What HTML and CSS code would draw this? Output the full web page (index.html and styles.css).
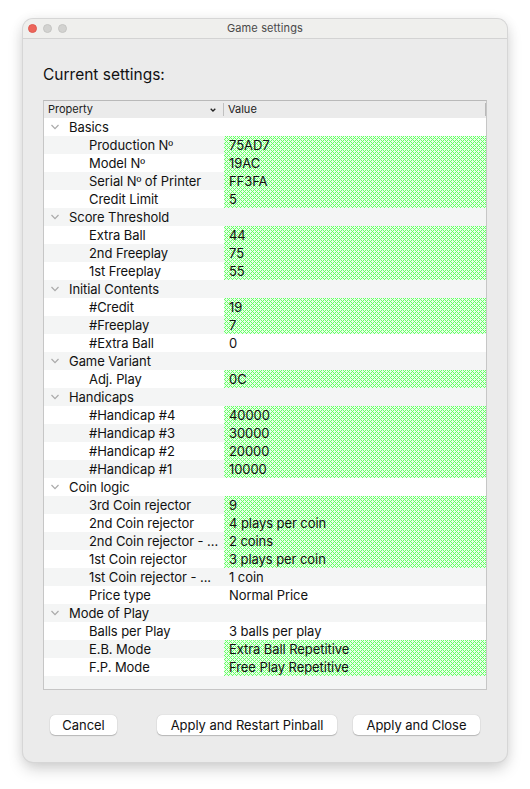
FILE: index.html
```
<!DOCTYPE html>
<html lang="en">
<head>
<meta charset="utf-8">
<title>Game settings</title>
<link rel="stylesheet" href="styles.css">
</head>
<body>
<main class="window">
  <header class="titlebar">
    <div class="lights"><i class="light close"></i><i class="light"></i><i class="light"></i></div>
    <span class="title">Game settings</span>
  </header>
  <h1 class="heading">Current settings:</h1>
  <section class="tree">
    <div class="head">
      <div class="head-property">Property
        <svg class="sort" width="6" height="4" viewBox="0 0 6 4"><path d="M.7.7 3 3 5.3.7" fill="none" stroke="#222" stroke-width="1.3"/></svg>
      </div>
      <div class="head-value">Value</div>
    </div>
    <div class="rows" id="rows"></div>
  </section>
  <footer class="buttons">
    <button class="cancel">Cancel</button>
    <button class="restart">Apply and Restart Pinball</button>
    <button class="apply">Apply and Close</button>
  </footer>
</main>
<script src="tree.js"></script>
</body>
</html>
```
FILE: styles.css
```
* { box-sizing: border-box; }
body { display: flow-root; margin: 0; height: 789px; overflow: hidden; background: #fff; font-family: Inter, "Liberation Sans", sans-serif; color: #111; }
.window { width: 484px; height: 743px; margin: 19px 0 0 23px; background: #ebebeb; border-radius: 10px; overflow: hidden; box-shadow: 0 0 0 1px #d6d6d6, 0 7px 15px rgba(0,0,0,.18), 0 0 14px rgba(0,0,0,.06); }
.titlebar { height: 20px; background: #efefed; border-bottom: 1px solid #d3d3d3; display: grid; grid-template-columns: 60px 1fr 60px; align-items: center; }
.lights { display: flex; gap: 6px; padding-left: 5px; }
.light { width: 9px; height: 9px; border-radius: 50%; background: #d2d2d0; border: 1px solid #c5c5c3; }
.close { background: #ed655a; border-color: #df5c52; }
.title { text-align: center; font-size: 11px; line-height: 18px; letter-spacing: .13px; color: #494949; position: relative; top: -1px; }
.heading { margin: 25px 0 0 20px; height: 36px; font-size: 15.5px; font-weight: 400; line-height: 22px; white-space: nowrap; }
.tree { width: 444px; height: 590px; margin-left: 20px; border: 1px solid #c6c6c6; border-top-color: #b9b9b9; background: #fff; overflow: hidden; }
.head { height: 17px; display: flex; align-items: center; background: #ebebeb; font-size: 11px; color: #222; }
.head-property { width: 180px; height: 13px; line-height: 12px; padding: 0 7px 0 4px; display: flex; justify-content: space-between; align-items: flex-start; border-right: 1px solid #c0c0c0; }
.sort { margin-top: 5px; }
.head-value { flex: 1; height: 13px; line-height: 12px; padding-left: 4px; border-right: 1px solid #b9b9b9; }
.row { height: 18px; display: flex; font-size: 13px; line-height: 18px; letter-spacing: -.07px; white-space: nowrap; background: #fff; }
.row:nth-child(even) { background: #f4f5f5; }
.group { padding-left: 7px; align-items: center; }
.group svg { margin-right: 10px; }
.name { width: 180px; padding-left: 45px; }
.ordinal { font-family: "Liberation Sans", sans-serif; line-height: 1; }
.value { flex: 1; padding-left: 5px; }
/* Sparse 4px lattice; odd rows shift it so that it runs on across rows. */
.changed {
  background-color: #e8ffe8;
  background-image: url("data:image/svg+xml,%3Csvg xmlns='http://www.w3.org/2000/svg' width='4' height='4' shape-rendering='crispEdges'%3E%3Cpath fill='%2366ff66' d='M1 0h1v1h-1zM3 0h1v1h-1zM2 1h1v1h-1zM1 2h1v1h-1zM3 2h1v1h-1zM0 3h1v1h-1z'/%3E%3C/svg%3E");
  background-size: 4px 4px;
}
.row:nth-child(odd) .changed { background-position: 0 2px; }
.buttons { display: flex; padding: 25px 27px 0 27px; }
button { height: 20px; padding: 0; border: 0; border-radius: 5px; background: #fff; box-shadow: 0 0 1px rgba(0,0,0,.25), 0 1px 1px rgba(0,0,0,.2); font: 13px/19px Inter, "Liberation Sans", sans-serif; letter-spacing: -.04px; color: #111; white-space: nowrap; }
.cancel { width: 67px; }
.restart { width: 180px; margin-left: auto; }
.apply { width: 127px; margin-left: 16px; }
```
FILE: tree.js
```
const groups = [
  ["Basics", [["Production Nº", "75AD7", 1], ["Model Nº", "19AC", 1], ["Serial Nº of Printer", "FF3FA", 1], ["Credit Limit", "5", 1]]],
  ["Score Threshold", [["Extra Ball", "44", 1], ["2nd Freeplay", "75", 1], ["1st Freeplay", "55", 1]]],
  ["Initial Contents", [["#Credit", "19", 1], ["#Freeplay", "7", 1], ["#Extra Ball", "0", 0]]],
  ["Game Variant", [["Adj. Play", "0C", 1]]],
  ["Handicaps", [["#Handicap #4", "40000", 1], ["#Handicap #3", "30000", 1], ["#Handicap #2", "20000", 1], ["#Handicap #1", "10000", 1]]],
  ["Coin logic", [["3rd Coin rejector", "9", 1], ["2nd Coin rejector", "4 plays per coin", 1], ["2nd Coin rejector - ...", "2 coins", 1], ["1st Coin rejector", "3 plays per coin", 1], ["1st Coin rejector - ...", "1 coin", 0], ["Price type", "Normal Price", 0]]],
  ["Mode of Play", [["Balls per Play", "3 balls per play", 0], ["E.B. Mode", "Extra Ball Repetitive", 1], ["F.P. Mode", "Free Play Repetitive", 1]]]
];
const arrow = '<svg width="8" height="6" viewBox="0 0 8 6"><path d="M.5 1 4 4.7 7.5 1" fill="none" stroke="#aaa" stroke-width="1.2"/></svg>';
const label = text => text.replace("º", '<span class="ordinal">º</span>');
document.getElementById("rows").innerHTML = groups.map(([title, items]) =>
  `<div class="row group">${arrow}<span>${title}</span></div>` +
  items.map(([name, value, changed]) => `<div class="row"><span class="name">${label(name)}</span><span class="value${changed ? " changed" : ""}">${value}</span></div>`).join("")
).join("") + '<div class="row"></div><div class="row"></div>';
```
